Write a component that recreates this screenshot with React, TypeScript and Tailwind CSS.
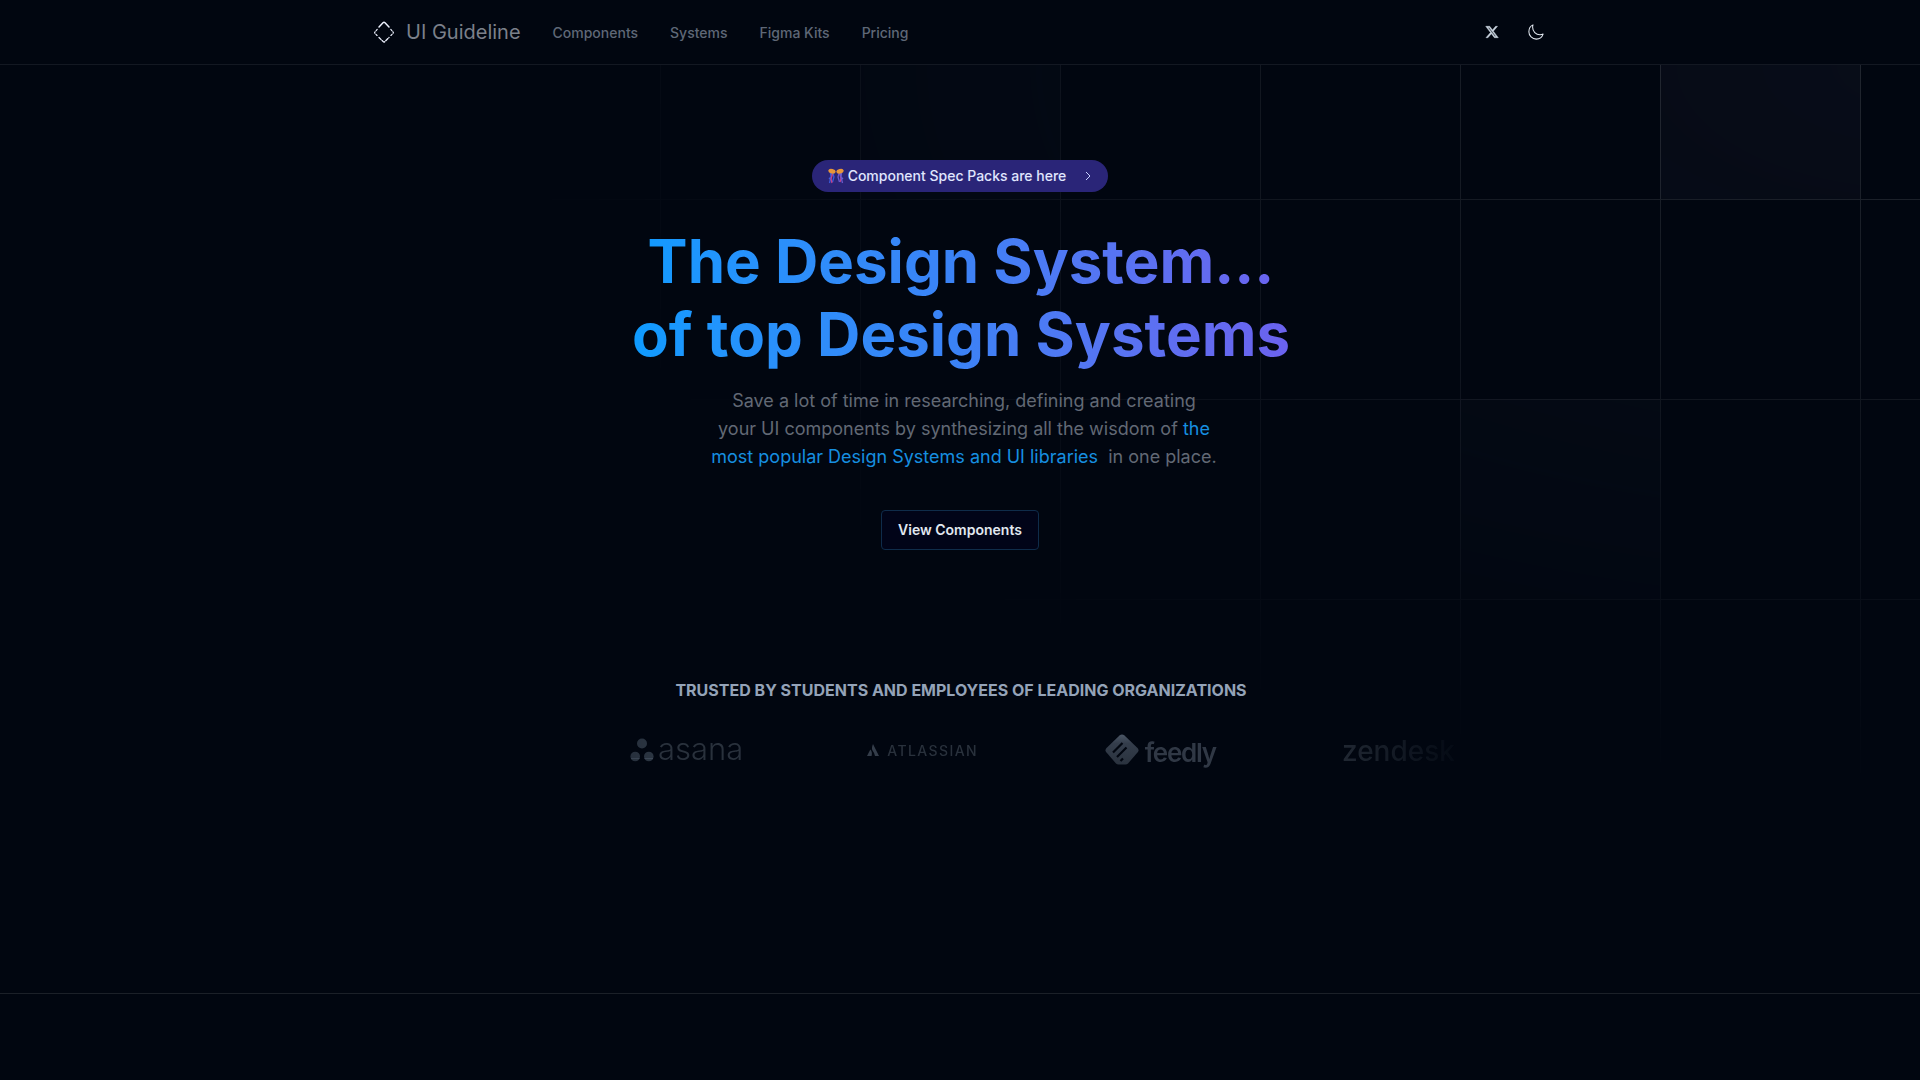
import type { ReactNode } from "react";

const navLinks = ["Components", "Systems", "Figma Kits", "Pricing"];

function BrandMark() {
  return (
    <svg viewBox="0 0 24 24" className="size-6" fill="none" stroke="#eef2ff" strokeWidth="1.5" strokeLinecap="round" strokeLinejoin="round" aria-hidden="true">
      <path d="M7 7 11 2.800q1-1 2 0L17 7" />
      <path d="M7 17.500 11.200 21.600q.8.8 1.600 0L17 17.500" strokeDasharray="3 1.400" strokeWidth="1.300" />
      <path d="M5.200 9.400 3 11.800q-.8.8 0 1.600l2.200 2.200" strokeDasharray="1.600 1.500" strokeWidth="1.200" />
      <path d="m18.800 9.400 2.200 2.400q.8.8 0 1.600l-2.200 2.200" strokeDasharray="1.600 1.500" strokeWidth="1.200" />
    </svg>
  );
}

function XIcon() {
  return (
    <svg viewBox="0 0 24 24" className="size-3.5" fill="#cbd5e1" stroke="#cbd5e1" strokeWidth="0.8" aria-hidden="true">
      <path d="M18.200 2.250h3.300l-7.200 8.260 8.500 11.240h-6.660l-5.200-6.820-5.970 6.820H1.660l7.730-8.840L1.250 2.250H8.100l4.700 6.230zm-1.160 17.520h1.830L7.080 4.130H5.120z" />
    </svg>
  );
}

function MoonIcon() {
  return (
    <svg viewBox="0 0 24 24" className="size-[18px]" fill="none" stroke="#e2e8f0" strokeWidth="1.4" strokeLinejoin="round" aria-hidden="true">
      <path d="M8 2.500a9.800 9.800 0 0 0-.5 3.200c0 5.600 4.400 10 9.800 10 1.500 0 2.900-.3 4.200-.9A10 10 0 0 1 12.400 21.500C7 21.500 2.500 17.200 2.500 11.700 2.500 7.600 4.600 4 8 2.500Z" />
    </svg>
  );
}

function PartyPopper() {
  return (
    <svg viewBox="0 0 16 16" className="size-4" aria-hidden="true">
      <path d="M4 5 1.500 15M5 5.500 6 9 4.500 14M2.500 5 3 9 1 11" stroke="#3b5bdb" strokeWidth="1.300" fill="none" />
      <path d="M4.500 6 3 11l1 4M12 6l1 5-1 3" stroke="#c2418a" strokeWidth="1.300" fill="none" />
      <path d="m12 5 2.500 10M11 5.500 10 9l1.500 5M13.500 5 13 9l2 2" stroke="#6a5acd" strokeWidth="1.300" fill="none" />
      <ellipse cx="4" cy="3.200" rx="3.700" ry="2.300" fill="#e8963a" transform="rotate(14 4 3.200)" />
      <ellipse cx="12" cy="3.200" rx="3.700" ry="2.300" fill="#e8963a" transform="rotate(-14 12 3.200)" />
    </svg>
  );
}

function GridBackdrop() {
  return (
    <svg
      className="pointer-events-none absolute inset-0 h-full w-full [mask-image:radial-gradient(76%_80%_at_top_right,white,transparent)]"
      aria-hidden="true"
    >
      <defs>
        <pattern id="cells" width="200" height="200" x="50%" y="-66" patternUnits="userSpaceOnUse" patternTransform="translate(-100 0)">
          <path d="M.5 200V.5H200" fill="none" stroke="white" strokeOpacity="0.13" />
        </pattern>
      </defs>
      <svg x="50%" y="-66" className="overflow-visible" fill="#1a1d2b" fillOpacity="0.32">
        <path d="M-100 0h200v200h-200ZM700 0h200v200h-200ZM500 400h200v200h-200Z" />
      </svg>
      <rect width="100%" height="100%" fill="url(#cells)" />
    </svg>
  );
}

function LogoSlot({ name, children }: { name: string; children: ReactNode }) {
  return (
    <li className="flex h-16 w-28 shrink-0 items-center" aria-label={name}>
      {children}
    </li>
  );
}

export default function App() {
  return (
    <div className="min-h-screen bg-[#010610] font-['Inter',sans-serif] text-slate-300">
      <header className="h-[65px] border-b border-[#131822]">
        <div className="mx-auto flex h-full max-w-[1176px] items-center justify-between pr-[3px]">
          <div className="flex items-center gap-8">
            <a href="#" className="flex items-center gap-2.5 text-xl text-[#7b808a]">
              <BrandMark />
              <span>UI Guideline</span>
            </a>
            <nav className="flex gap-8 pt-px text-sm font-medium text-[#5f6877]">
              {navLinks.map((label) => (
                <a key={label} href="#">{label}</a>
              ))}
            </nav>
          </div>
          <div className="flex items-center gap-7">
            <a href="#" aria-label="X"><XIcon /></a>
            <button type="button" aria-label="Toggle theme"><MoonIcon /></button>
          </div>
        </div>
      </header>

      <main className="relative overflow-hidden border-b border-[#1b2028] pt-[95px] pb-[211px]">
        <GridBackdrop />
        <section className="relative flex flex-col items-center text-center">
          <a href="#" className="flex h-8 items-center gap-1 rounded-full bg-[#2a2578] px-4 pr-3 text-sm font-medium text-indigo-100">
            <PartyPopper />
            <span>Component Spec Packs are here</span>
            <svg viewBox="0 0 16 16" className="ml-2.5 size-4" fill="none" stroke="#c7d2fe" aria-hidden="true"><path d="m6 4 4 4-4 4" /></svg>
          </a>
          <h1 className="mt-[33px] bg-linear-to-r from-[#0c9bff] via-[#3b82f6] to-[#6b62ee] bg-clip-text pl-0.5 text-[60px] leading-[73px] font-bold text-transparent">
            The Design System...<br />of top Design Systems
          </h1>
          <p className="mt-4 pl-2 text-lg leading-7 text-[#626975]">
            Save a lot of time in researching, defining and creating<br />
            your UI components by synthesizing all the wisdom of{" "}
            <a href="#" className="text-[#168fe0]">the<br />most popular Design Systems and UI libraries</a>
            &nbsp; in one place.
          </p>
          <a href="#" className="mt-[39px] flex h-10 items-center rounded border border-[#0f2c4a] bg-[#010418] px-4 text-sm font-semibold text-slate-200">
            View Components
          </a>
        </section>

        <section className="relative mt-32 flex flex-col items-center">
          <h2 className="pl-0.5 text-base font-bold text-[#94a3b8] uppercase">Trusted by students and employees of leading organizations</h2>
          <ul className="mt-4 flex w-full max-w-5xl justify-between pr-[18px] pl-[182px] text-[#29313c] [mask-image:linear-gradient(to_right,transparent,white_20%,white_84%,transparent)]">
            <LogoSlot name="asana">
              <svg viewBox="0 0 24 24" className="size-6 shrink-0" fill="#2b3542" aria-hidden="true">
                <circle cx="12" cy="5.500" r="5" /><circle cx="5.200" cy="18.500" r="4.800" /><circle cx="18.800" cy="18.500" r="4.800" />
                <path d="M1 20.600h8.500M14.500 20.600H23" stroke="#414c5b" strokeWidth="1" />
              </svg>
              <span className="ml-1 pb-0.5 text-[31px] leading-8 font-light">asana</span>
            </LogoSlot>
            <LogoSlot name="Atlassian">
              <svg viewBox="0 0 12 12" className="size-3 shrink-0" fill="#343d4a" aria-hidden="true">
                <path d="M3.300 5.500Q5.600 7.500 4.600 12H0ZM6 0l6 12H8Q7.500 9 5.500 6.500 4.200 4 6 0Z" />
              </svg>
              <span className="ml-2 pt-0.5 text-sm font-medium tracking-widest">ATLASSIAN</span>
            </LogoSlot>
            <LogoSlot name="feedly">
              <svg viewBox="0 0 34 32" className="h-8 w-[34px] shrink-0" aria-hidden="true">
                <defs>
                  <linearGradient id="feedly-fill" x2="0" y2="1">
                    <stop stopColor="#4b5666" />
                    <stop offset="0.3" stopColor="#343d4b" />
                    <stop offset="1" stopColor="#2a323e" />
                  </linearGradient>
                </defs>
                <path d="M14.500 1.500q2.500-2 5 0l13 12.500q2 2 0 4.500L23 29.500q-1 1-2.500 1h-7q-1.500 0-2.500-1L1.500 18.500q-2-2.500 0-4.500Z" fill="url(#feedly-fill)" />
                <path d="m8 18.500 9.500-9.500M12 23l9.500-9.500M15.500 27l2.500-2.500" stroke="#010610" strokeWidth="2.200" />
              </svg>
              <span className="ml-1.5 pt-1 text-[26px] font-semibold tracking-tighter text-[#303845]">feedly</span>
            </LogoSlot>
            <LogoSlot name="zendesk">
              <span className="pt-0.5 text-[28px] font-medium">zendesk</span>
            </LogoSlot>
          </ul>
        </section>
      </main>
    </div>
  );
}
